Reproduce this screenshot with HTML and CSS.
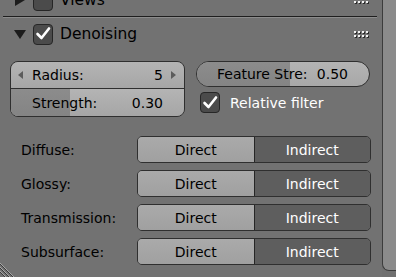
FILE: index.html
```html
<!DOCTYPE html>
<html lang="en">
<head>
    <meta charset="UTF-8" />
    <title>Denoising</title>
    <link rel="stylesheet" href="styles.css">
</head>
<body>
    <div class="app">
        <div class="panel">
            <!-- Views (collapsed, cut off at top) -->
            <div class="header views">
                <svg class="tri" width="12" height="12" viewBox="0 0 12 12"><polygon points="1,0 11,6 1,12" /></svg>
                <span class="check off"></span>
                <span class="title">Views</span>
                <svg class="grip" width="15" height="7" viewBox="0 0 15 7">
                    <g class="shadow"><rect x="1" y="1" width="2" height="2"/><rect x="5" y="1" width="2" height="2"/><rect x="9" y="1" width="2" height="2"/><rect x="13" y="1" width="2" height="2"/><rect x="1" y="5" width="2" height="2"/><rect x="5" y="5" width="2" height="2"/><rect x="9" y="5" width="2" height="2"/><rect x="13" y="5" width="2" height="2"/></g>
                    <g class="dots"><rect x="0" y="0" width="2" height="2"/><rect x="4" y="0" width="2" height="2"/><rect x="8" y="0" width="2" height="2"/><rect x="12" y="0" width="2" height="2"/><rect x="0" y="4" width="2" height="2"/><rect x="4" y="4" width="2" height="2"/><rect x="8" y="4" width="2" height="2"/><rect x="12" y="4" width="2" height="2"/></g>
                </svg>
            </div>
            <div class="sep"></div>

            <!-- Denoising -->
            <div class="header">
                <svg class="tri" width="12" height="10" viewBox="0 0 12 10"><polygon points="0,1 12,1 6,10" /></svg>
                <span class="check">
                    <svg width="18" height="18" viewBox="0 0 18 18"><polyline points="3.5,9 7.5,13 15,3.5" /></svg>
                </span>
                <span class="title">Denoising</span>
                <svg class="grip" width="15" height="7" viewBox="0 0 15 7">
                    <g class="shadow"><rect x="1" y="1" width="2" height="2"/><rect x="5" y="1" width="2" height="2"/><rect x="9" y="1" width="2" height="2"/><rect x="13" y="1" width="2" height="2"/><rect x="1" y="5" width="2" height="2"/><rect x="5" y="5" width="2" height="2"/><rect x="9" y="5" width="2" height="2"/><rect x="13" y="5" width="2" height="2"/></g>
                    <g class="dots"><rect x="0" y="0" width="2" height="2"/><rect x="4" y="0" width="2" height="2"/><rect x="8" y="0" width="2" height="2"/><rect x="12" y="0" width="2" height="2"/><rect x="0" y="4" width="2" height="2"/><rect x="4" y="4" width="2" height="2"/><rect x="8" y="4" width="2" height="2"/><rect x="12" y="4" width="2" height="2"/></g>
                </svg>
            </div>

            <div class="content">
                <div class="cols">
                    <div class="numgroup">
                        <div class="num">
                            <svg class="arrow" width="5" height="8" viewBox="0 0 5 8"><polygon points="5,0 0,4 5,8" /></svg>
                            <span class="label">Radius:</span>
                            <span class="value">5</span>
                            <svg class="arrow" width="5" height="8" viewBox="0 0 5 8"><polygon points="0,0 5,4 0,8" /></svg>
                        </div>
                        <div class="num slider">
                            <div class="fill" style="width: 34%"></div>
                            <span class="label">Strength:</span>
                            <span class="value">0.30</span>
                        </div>
                    </div>

                    <div class="rightcol">
                        <div class="pill slider">
                            <div class="fill" style="width: 54%"></div>
                            <span class="label">Feature Stre:</span>
                            <span class="value">0.50</span>
                        </div>
                        <div class="option">
                            <span class="check">
                                <svg width="18" height="18" viewBox="0 0 18 18"><polyline points="3.5,9 7.5,13 15,3.5" /></svg>
                            </span>
                            <span>Relative filter</span>
                        </div>
                    </div>
                </div>

                <div class="passes">
                    <div class="pass">
                        <span class="name">Diffuse:</span>
                        <div class="toggle"><span class="on">Direct</span><span class="off">Indirect</span></div>
                    </div>
                    <div class="pass">
                        <span class="name">Glossy:</span>
                        <div class="toggle"><span class="on">Direct</span><span class="off">Indirect</span></div>
                    </div>
                    <div class="pass">
                        <span class="name">Transmission:</span>
                        <div class="toggle"><span class="on">Direct</span><span class="off">Indirect</span></div>
                    </div>
                    <div class="pass">
                        <span class="name">Subsurface:</span>
                        <div class="toggle"><span class="on">Direct</span><span class="off">Indirect</span></div>
                    </div>
                </div>
            </div>
        </div>

        <div class="scroll"></div>
    </div>

    <!-- esquina de redimensionar -->
    <svg class="corner" width="16" height="16" viewBox="0 0 16 16">
        <line x1="0" y1="2" x2="14" y2="16" class="lt" />
        <line x1="0" y1="3" x2="13" y2="16" class="dk" />
        <line x1="0" y1="6" x2="10" y2="16" class="lt" />
        <line x1="0" y1="7" x2="9" y2="16" class="dk" />
        <line x1="0" y1="10" x2="6" y2="16" class="lt" />
        <line x1="0" y1="11" x2="5" y2="16" class="dk" />
    </svg>
</body>
</html>
```

FILE: styles.css
```css
body {
    margin: 0;
    padding: 0;
    width: 396px;
    height: 277px;
    overflow: hidden;
    background-color: #707070;
    font-family: 'DejaVu Sans', sans-serif;
    font-size: 14px;
    color: #000;
}

.app {
    display: flex;
    height: 277px;
}

.panel {
    width: 382px;
    background-color: #727272;
    display: flex;
    flex-direction: column;
}

/* CABECERAS */
.header {
    display: flex;
    align-items: center;
    height: 32px;
    padding-left: 14px;
    padding-right: 13px;
}

.header.views {
    margin-top: -16px;
}

.header .tri {
    fill: #1c1c1c;
    margin-right: 7px;
}

.header .title {
    font-size: 15.5px;
    margin-left: 7px;
    flex: 1;
}

.grip .dots { fill: #f2f2f2; }
.grip .shadow { fill: #2a2a2a; }

.sep {
    margin: 0 5px 0 3px;
    height: 1px;
    background-color: #1e1e1e;
    border-bottom: 1px solid #8c8c8c;
}

/* CASILLAS */
.check {
    display: inline-flex;
    align-items: center;
    justify-content: center;
    width: 18px;
    height: 19px;
    background-color: #4b4b4b;
    border: 1px solid #262626;
    border-radius: 4px;
}

.check svg polyline {
    fill: none;
    stroke: #fff;
    stroke-width: 2.6;
    stroke-linecap: round;
    stroke-linejoin: round;
}

/* CONTENIDO */
.content {
    padding: 11px 11px 0 10px;
}

.cols {
    display: flex;
    gap: 11px;
}

.numgroup {
    width: 173px;
    border: 1px solid #2f2f2f;
    border-radius: 8px;
    overflow: hidden;
}

.num {
    position: relative;
    display: flex;
    align-items: center;
    height: 26px;
    padding: 0 8px 0 7px;
    background: linear-gradient(#b4b4b4, #a6a6a6);
}

.num + .num {
    border-top: 1px solid #2f2f2f;
    height: 27px;
    padding-left: 21px;
    padding-right: 21px;
}

.num .arrow {
    fill: #5c5c5c;
}

.num .label {
    flex: 1;
    margin-left: 9px;
}

.num .value {
    margin-right: 8px;
}

.num + .num .label { margin-left: 0; }
.num + .num .value { margin-right: 0; }

.slider .fill {
    position: absolute;
    top: 0;
    left: 0;
    bottom: 0;
    background: linear-gradient(#8c8c8c, #848484);
}

.slider .label,
.slider .value {
    position: relative;
}

.rightcol {
    width: 174px;
    display: flex;
    flex-direction: column;
}

.pill {
    position: relative;
    display: flex;
    align-items: center;
    justify-content: space-between;
    height: 24px;
    padding: 0 21px 0 20px;
    border: 1px solid #2f2f2f;
    border-radius: 13px;
    overflow: hidden;
    background: linear-gradient(#b4b4b4, #a8a8a8);
}

.option {
    display: flex;
    align-items: center;
    gap: 10px;
    margin-top: 5px;
    padding-left: 4px;
    color: #fff;
}

/* PASES */
.passes {
    display: flex;
    flex-direction: column;
    gap: 7px;
    margin-top: 19px;
}

.pass {
    display: flex;
    align-items: center;
    padding-left: 11px;
}

.pass .name {
    width: 116px;
}

.toggle {
    display: flex;
    width: 232px;
    height: 25px;
    border: 1px solid #2f2f2f;
    border-radius: 5px;
    overflow: hidden;
}

.toggle span {
    flex: 1;
    display: flex;
    align-items: center;
    justify-content: center;
}

.toggle .on {
    background: linear-gradient(#aaaaaa, #a0a0a0);
    border-right: 1px solid #262626;
}

.toggle .off {
    background-color: #5e5e5e;
    color: #fff;
}

/* BARRA LATERAL */
.scroll {
    width: 13px;
    height: 270px;
    background-color: #8b8b8b;
    border-left: 1px solid #3c3c3c;
    border-bottom: 1px solid #3c3c3c;
    border-bottom-left-radius: 7px;
}

.corner {
    position: absolute;
    left: 0;
    bottom: 0;
}

.corner line { stroke-width: 1; }
.corner .lt { stroke: #a8a8a8; }
.corner .dk { stroke: #3a3a3a; }
```
